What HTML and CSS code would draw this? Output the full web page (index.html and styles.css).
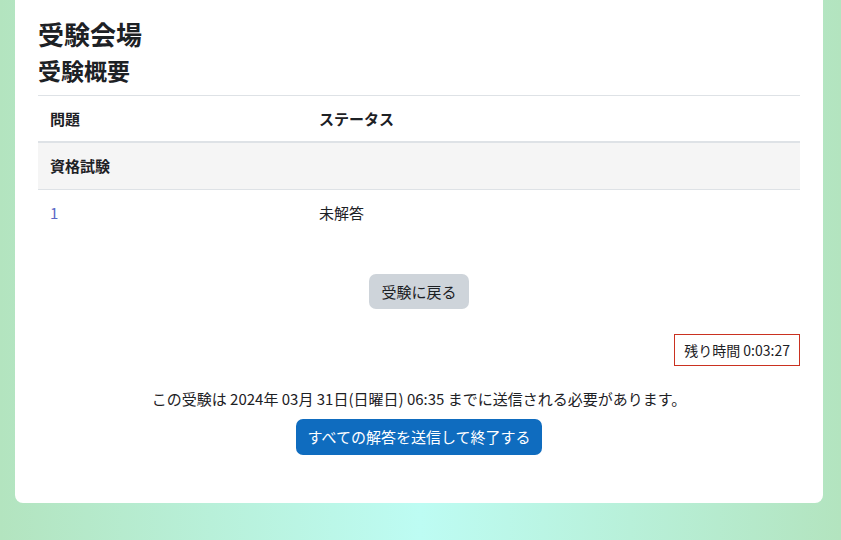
FILE: index.html
```html
<!DOCTYPE html>
<html>
<head>
<link rel="stylesheet" href="styles.css">
</head>
<body>

<div class="page">
  <div class="card">
    <h2 class="page-title">受験会場</h2>
    <h3 class="section-title">受験概要</h3>

    <table class="summary-table">
      <thead>
        <tr>
          <th class="col-question">問題</th>
          <th class="col-status">ステータス</th>
        </tr>
      </thead>
      <tbody>
        <tr class="section-row">
          <th colspan="2">資格試験</th>
        </tr>
        <tr>
          <td class="col-question"><a href="#" class="question-link">1</a></td>
          <td class="col-status">未解答</td>
        </tr>
      </tbody>
    </table>

    <div class="return-container">
      <button class="btn btn-secondary">受験に戻る</button>
    </div>

    <div class="timer-container">
      <div class="timer-box">残り時間 0:03:27</div>
    </div>

    <div class="submit-container">
      <p class="due-text">この受験は 2024年 03月 31日(日曜日) 06:35 までに送信される必要があります。</p>
      <button class="btn btn-primary">すべての解答を送信して終了する</button>
    </div>
  </div>
</div>

</body>
</html>
```

FILE: styles.css
```css
html, body {
  height: 100%;
}

body {
  margin: 0;
  background: linear-gradient(to right, #b3e4bf 0%, #bdfcf3 50%, #b3e4bf 100%);
  color: #1d2125;
  font-family: "Noto Sans CJK JP", "Noto Sans", sans-serif;
  font-size: 15px;
  line-height: 1.5;
}

.page {
  padding: 0 18px 0 15px;
}

.card {
  background-color: white;
  border-radius: 0 0 8px 8px;
  padding: 18px 23px 48px 23px;
}

.page-title {
  font-size: 26px;
  font-weight: bold;
  line-height: 1.2;
  margin: 0 0 8px 0;
}

.section-title {
  font-size: 23px;
  font-weight: bold;
  line-height: 1.2;
  margin: 0 0 10px 0;
}

.summary-table {
  border-collapse: collapse;
  table-layout: fixed;
  width: 100%;
  margin-bottom: 39px;
}

.summary-table th,
.summary-table td {
  border-top: 1px solid #dee2e6;
  padding: 12px 12px 11px 12px;
  text-align: left;
  vertical-align: top;
}

.summary-table th {
  font-weight: bold;
}

.summary-table thead th {
  border-bottom: 2px solid #dee2e6;
}

.col-question {
  width: 245px;
}

.section-row th {
  background-color: #f5f5f5;
  border-bottom: 1px solid #dee2e6;
}

.question-link {
  color: #5b68c6;
  text-decoration: none;
}

.return-container {
  display: flex;
  justify-content: center;
  margin-bottom: 25px;
}

.btn {
  border: none;
  border-radius: 7px;
  font-family: inherit;
  font-size: 15px;
  line-height: 23px;
  padding: 6px 12px;
}

.btn-secondary {
  background-color: #ced4da;
  color: #1d2125;
}

.btn-primary {
  background-color: #0f6cbf;
  color: white;
  line-height: 24px;
  padding: 6px 12px;
}

.timer-container {
  display: flex;
  justify-content: flex-end;
  margin-bottom: 22px;
}

.timer-box {
  border: 1px solid #ca3120;
  font-size: 14px;
  line-height: 21px;
  padding: 5px 9px 4px 9px;
}

.submit-container {
  display: flex;
  flex-direction: column;
  align-items: center;
}

.due-text {
  margin: 0 0 8px 0;
}
```
